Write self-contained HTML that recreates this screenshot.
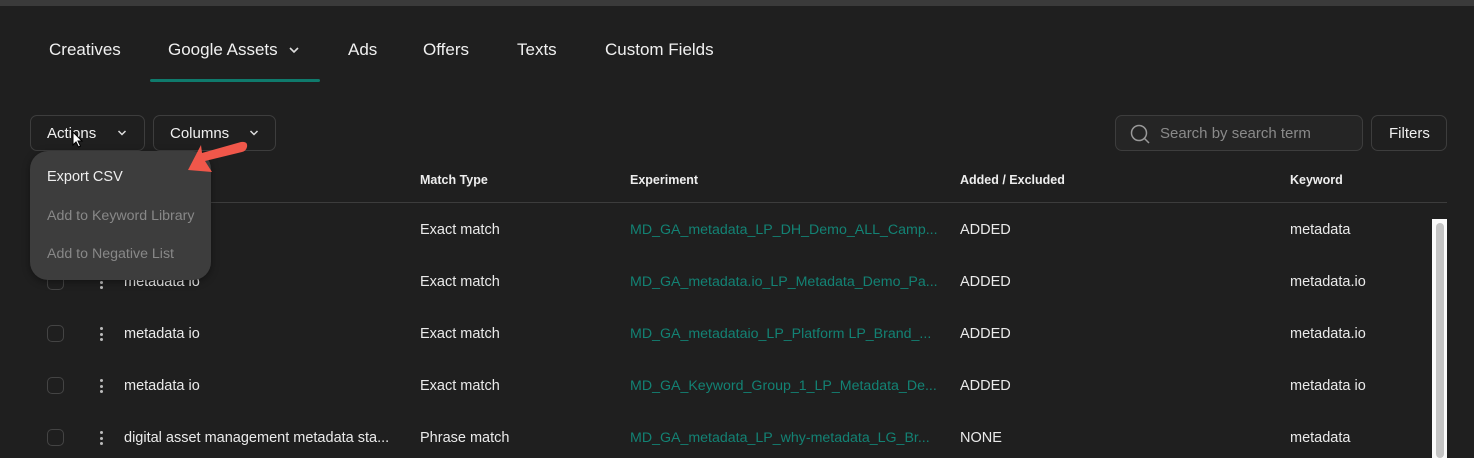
<!DOCTYPE html>
<html><head><meta charset="utf-8"><style>
*{margin:0;padding:0;box-sizing:border-box}
body{width:1474px;height:458px;background:#1f1f1f;font-family:"Liberation Sans",sans-serif;color:#e8e8e8;position:relative;overflow:hidden}
.a{position:absolute;white-space:nowrap}
.tab{font-size:17px;top:40px;color:#f0f0f0}
.btn{position:absolute;top:115px;height:36px;border:1px solid #3d3d3d;border-radius:7px;background:#1f1f1f;font-size:15px;color:#f0f0f0}
.hd{font-size:12.5px;font-weight:bold;top:173px;color:#eee}
.c{font-size:14.5px;color:#eaeaea}
.l{font-size:14.2px;color:#138274}
.cb{position:absolute;left:47px;width:17px;height:17px;border:1.5px solid #444;border-radius:5px}
.dots{position:absolute;left:100px;width:3px}
.dots i{display:block;width:3px;height:3px;background:#bbb;border-radius:50%;margin-bottom:2.5px}
</style></head><body>
<div class="a" style="left:0;top:0;width:1474px;height:6px;background:#3a3a3a"></div>
<div class="a tab" style="left:49px">Creatives</div>
<div class="a tab" style="left:168px">Google Assets</div>
<svg class="a" style="left:288px;top:45px" width="12" height="10"><path d="M2 3l4 4 4-4" stroke="#ddd" stroke-width="1.6" fill="none"/></svg>
<div class="a" style="left:150px;top:79px;width:170px;height:3px;background:#0f7a6c;border-radius:2px"></div>
<div class="a tab" style="left:348px">Ads</div>
<div class="a tab" style="left:423px">Offers</div>
<div class="a tab" style="left:517px">Texts</div>
<div class="a tab" style="left:605px">Custom Fields</div>

<div class="btn" style="left:30px;width:115px"><span class="a" style="left:16px;top:9px">Actions</span><svg class="a" style="left:86px;top:13px" width="10" height="8"><path d="M1.5 2l3.5 3.5 3.5-3.5" stroke="#ddd" stroke-width="1.5" fill="none"/></svg></div>
<div class="btn" style="left:153px;width:123px"><span class="a" style="left:16px;top:9px">Columns</span><svg class="a" style="left:95px;top:13px" width="10" height="8"><path d="M1.5 2l3.5 3.5 3.5-3.5" stroke="#ddd" stroke-width="1.5" fill="none"/></svg></div>
<div class="btn" style="left:1115px;width:248px;background:#252525"><svg class="a" style="left:13px;top:7px" width="22" height="22"><circle cx="10" cy="10" r="7.5" stroke="#999" stroke-width="1.5" fill="none"/><path d="M15.5 15.5l4.5 4.5" stroke="#999" stroke-width="1.5"/></svg><span class="a" style="left:44px;top:9px;color:#8a8a8a">Search by search term</span></div>
<div class="btn" style="left:1371px;width:76px"><span class="a" style="left:17px;top:9px">Filters</span></div>

<div class="a hd" style="left:420px">Match Type</div>
<div class="a hd" style="left:630px">Experiment</div>
<div class="a hd" style="left:960px">Added / Excluded</div>
<div class="a hd" style="left:1290px">Keyword</div>
<div class="a" style="left:30px;top:202px;width:1417px;height:1px;background:#3c3c3c"></div>

<div class="cb" style="top:273px"></div><div class="dots" style="top:275px"><i></i><i></i><i></i></div><div class="a c" style="left:124px;top:274px">metadata io</div>
<div class="cb" style="top:325px"></div><div class="dots" style="top:327px"><i></i><i></i><i></i></div><div class="a c" style="left:124px;top:326px">metadata io</div>
<div class="cb" style="top:377px"></div><div class="dots" style="top:379px"><i></i><i></i><i></i></div><div class="a c" style="left:124px;top:378px">metadata io</div>
<div class="cb" style="top:429px"></div><div class="dots" style="top:431px"><i></i><i></i><i></i></div><div class="a c" style="left:124px;top:430px">digital asset management metadata sta...</div>

<div class="a c" style="left:420px;top:222px">Exact match</div>
<div class="a c" style="left:420px;top:274px">Exact match</div>
<div class="a c" style="left:420px;top:326px">Exact match</div>
<div class="a c" style="left:420px;top:378px">Exact match</div>
<div class="a c" style="left:420px;top:430px">Phrase match</div>

<div class="a l" style="left:630px;top:222px">MD_GA_metadata_LP_DH_Demo_ALL_Camp...</div>
<div class="a l" style="left:630px;top:274px">MD_GA_metadata.io_LP_Metadata_Demo_Pa...</div>
<div class="a l" style="left:630px;top:326px">MD_GA_metadataio_LP_Platform LP_Brand_...</div>
<div class="a l" style="left:630px;top:378px">MD_GA_Keyword_Group_1_LP_Metadata_De...</div>
<div class="a l" style="left:630px;top:430px">MD_GA_metadata_LP_why-metadata_LG_Br...</div>

<div class="a c" style="left:960px;top:222px">ADDED</div>
<div class="a c" style="left:960px;top:274px">ADDED</div>
<div class="a c" style="left:960px;top:326px">ADDED</div>
<div class="a c" style="left:960px;top:378px">ADDED</div>
<div class="a c" style="left:960px;top:430px">NONE</div>

<div class="a c" style="left:1290px;top:222px">metadata</div>
<div class="a c" style="left:1290px;top:274px">metadata.io</div>
<div class="a c" style="left:1290px;top:326px">metadata.io</div>
<div class="a c" style="left:1290px;top:378px">metadata io</div>
<div class="a c" style="left:1290px;top:430px">metadata</div>

<div class="a" style="left:1432px;top:219px;width:15px;height:239px;background:#fafafa"></div>
<div class="a" style="left:1436px;top:223px;width:8px;height:235px;background:#c4c4c4;border-radius:4px"></div>

<div class="a" style="left:30px;top:151px;width:181px;height:129px;background:#3d3d3d;border-radius:18px;box-shadow:0 2px 8px rgba(0,0,0,.4)">
<div class="a" style="left:17px;top:18px;font-size:14.5px;color:#eee">Export CSV</div>
<div class="a" style="left:17px;top:57px;font-size:14.2px;color:#888">Add to Keyword Library</div>
<div class="a" style="left:17px;top:95px;font-size:14.2px;color:#888">Add to Negative List</div>
</div>
<svg class="a" style="left:185px;top:140px" width="65" height="36"><path d="M3 30 L16 5 L17 13 L56 2 Q63 1 62 7 Q61 11 57 12 L20 21 L27 32 Z" fill="#f0574a"/></svg>
<svg class="a" style="left:71px;top:131px" width="14" height="18"><path d="M2 1v13l3-3 2.5 5 2-1-2.5-5h4z" fill="#fff" stroke="#000" stroke-width="1"/></svg>
</body></html>
